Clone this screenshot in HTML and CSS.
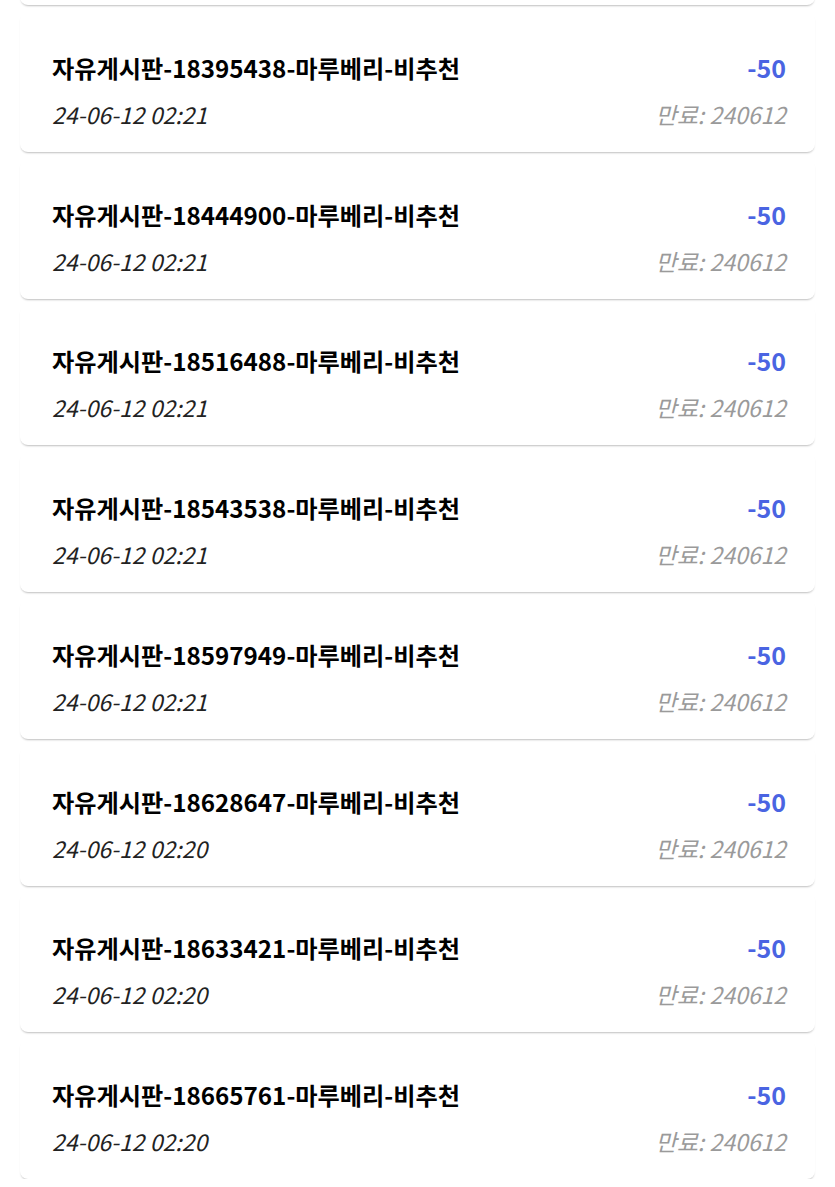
FILE: index.html
```html
<!DOCTYPE html>
<html>
<head>
	<meta charset="utf-8">
	<title>포인트 내역</title>
<link rel="stylesheet" href="styles.css">
</head>

<body>

<div id="list_point">
<div class="item"></div>
<div class="item">
<div class="row_top"><span class="txt_title">자유게시판-18395438-마루베리-비추천</span><span class="txt_point">-50</span></div>
<div class="row_bottom"><span class="txt_date">24-06-12 02:21</span><span class="txt_expire">만료: 240612</span></div>
</div>
<div class="item">
<div class="row_top"><span class="txt_title">자유게시판-18444900-마루베리-비추천</span><span class="txt_point">-50</span></div>
<div class="row_bottom"><span class="txt_date">24-06-12 02:21</span><span class="txt_expire">만료: 240612</span></div>
</div>
<div class="item">
<div class="row_top"><span class="txt_title">자유게시판-18516488-마루베리-비추천</span><span class="txt_point">-50</span></div>
<div class="row_bottom"><span class="txt_date">24-06-12 02:21</span><span class="txt_expire">만료: 240612</span></div>
</div>
<div class="item">
<div class="row_top"><span class="txt_title">자유게시판-18543538-마루베리-비추천</span><span class="txt_point">-50</span></div>
<div class="row_bottom"><span class="txt_date">24-06-12 02:21</span><span class="txt_expire">만료: 240612</span></div>
</div>
<div class="item">
<div class="row_top"><span class="txt_title">자유게시판-18597949-마루베리-비추천</span><span class="txt_point">-50</span></div>
<div class="row_bottom"><span class="txt_date">24-06-12 02:21</span><span class="txt_expire">만료: 240612</span></div>
</div>
<div class="item">
<div class="row_top"><span class="txt_title">자유게시판-18628647-마루베리-비추천</span><span class="txt_point">-50</span></div>
<div class="row_bottom"><span class="txt_date">24-06-12 02:20</span><span class="txt_expire">만료: 240612</span></div>
</div>
<div class="item">
<div class="row_top"><span class="txt_title">자유게시판-18633421-마루베리-비추천</span><span class="txt_point">-50</span></div>
<div class="row_bottom"><span class="txt_date">24-06-12 02:20</span><span class="txt_expire">만료: 240612</span></div>
</div>
<div class="item">
<div class="row_top"><span class="txt_title">자유게시판-18665761-마루베리-비추천</span><span class="txt_point">-50</span></div>
<div class="row_bottom"><span class="txt_date">24-06-12 02:20</span><span class="txt_expire">만료: 240612</span></div>
</div>
</div>

</body>

</html>
```

FILE: styles.css
```css
body {
	margin: 0;
	background-color: #fff;
	font-family: "Noto Sans CJK KR", "Noto Sans", sans-serif;
	overflow: hidden;
}

#list_point {
	display: flex;
	flex-direction: column;
	gap: 6.75px;
	padding: 0 20px;
	margin-top: -135px;
}

.item {
	height: 140px;
	box-sizing: border-box;
	padding: 37px 29px 0 32px;

	background-color: #fff;
	border-radius: 8px;
	box-shadow: 0 2px 2px -1px rgba(0, 0, 0, 0.25);
}

.row_top, .row_bottom {
	display: flex;
	justify-content: space-between;
	align-items: baseline;
}

.row_bottom {
	margin-top: 10px;
}

.txt_title {
	font-size: 24.2px;
	font-weight: bold;
	line-height: 36px;
	color: #000;
}

.txt_point {
	font-size: 25px;
	font-weight: bold;
	color: #4a64e2;
}

.txt_date, .txt_expire {
	font-size: 23px;
	font-style: italic;
	line-height: 36px;
}

.txt_date {
	color: #222;
}

.txt_expire {
	color: #9a9a9a;
}
```
